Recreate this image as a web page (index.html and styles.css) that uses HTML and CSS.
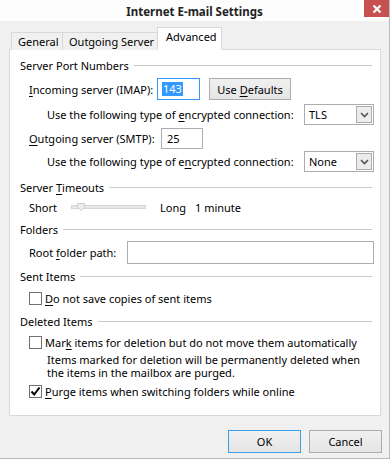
FILE: index.html
```html
<!DOCTYPE html>
<html>
<head>
<meta charset="utf-8">
<link rel="stylesheet" href="styles.css">
</head>
<body>
<div class="window">
  <div class="titlebar">
    <span class="title">Internet E-mail Settings</span>
    <div class="close"><svg width="10" height="10" viewBox="0 0 10 10"><path d="M1.5 1.5 L8.5 8.5 M8.5 1.5 L1.5 8.5" stroke="#fff" stroke-width="2.2" fill="none"/></svg></div>
  </div>
  <div class="body">
    <div class="tabs">
      <div class="tab t-general">General</div>
      <div class="tab t-out">Outgoing Server</div>
      <div class="tab active">Advanced</div>
    </div>
    <div class="panel">
      <div class="group g1"><span>Server Port Numbers</span><i class="line"></i></div>
      <div class="row r-in">
        <span class="lbl lbl-in"><u>I</u>ncoming server (IMAP):</span>
        <span class="input in-in focus"><span class="sel">143</span></span>
        <span class="btn defaults"><span>Use <u>D</u>efaults</span></span>
      </div>
      <div class="row r-enc1">
        <span class="lbl lbl-enc">Use the following type of <u>e</u>ncrypted connection:</span>
        <span class="select"><span class="val">TLS</span><span class="arrow"><svg width="9" height="6" viewBox="0 0 9 6"><path d="M1 1 L4.5 4.5 L8 1" stroke="#555" stroke-width="1.6" fill="none"/></svg></span></span>
      </div>
      <div class="row r-out">
        <span class="lbl lbl-out"><u>O</u>utgoing server (SMTP):</span>
        <span class="input in-out">25</span>
      </div>
      <div class="row r-enc2">
        <span class="lbl lbl-enc">Use the following type of e<u>n</u>crypted connection:</span>
        <span class="select"><span class="val">None</span><span class="arrow"><svg width="9" height="6" viewBox="0 0 9 6"><path d="M1 1 L4.5 4.5 L8 1" stroke="#555" stroke-width="1.6" fill="none"/></svg></span></span>
      </div>
      <div class="group g2"><span>Server <u>T</u>imeouts</span><i class="line"></i></div>
      <div class="row r-slider">
        <span class="lbl lbl-short">Short</span>
        <span class="track"><span class="thumb"><svg width="8" height="8" viewBox="0 0 8 8"><path d="M0.5 0.5 H7.5 V4.5 L4 7.5 L0.5 4.5 Z" fill="#ececec" stroke="#d0d0d0"/></svg></span></span>
        <span class="lbl lbl-long">Long</span>
        <span class="lbl">1 minute</span>
      </div>
      <div class="group g3"><span>Folders</span><i class="line"></i></div>
      <div class="row r-root">
        <span class="lbl lbl-root">Root <u>f</u>older path:</span>
        <span class="input in-root"></span>
      </div>
      <div class="group g4"><span>Sent Items</span><i class="line"></i></div>
      <div class="row r-cb1">
        <span class="cb"></span><span class="lbl"><u>D</u>o not save copies of sent items</span>
      </div>
      <div class="group g5"><span>Deleted Items</span><i class="line"></i></div>
      <div class="row r-cb2">
        <span class="cb"></span><span class="lbl">Mar<u>k</u> items for deletion but do not move them automatically</span>
      </div>
      <div class="note">Items marked for deletion will be permanently deleted when<br>the items in the mailbox are purged.</div>
      <div class="row r-cb3">
        <span class="cb checked"><svg width="11" height="11" viewBox="0 0 11 11"><path d="M1.5 5.5 L4.2 8.5 L9.5 1.5" stroke="#000" stroke-width="2" fill="none"/></svg></span><span class="lbl"><u>P</u>urge items when switching folders while online</span>
      </div>
    </div>
    <div class="buttons">
      <span class="btn dlg default">OK</span>
      <span class="btn dlg">Cancel</span>
    </div>
  </div>
</div>
</body>
</html>
```
FILE: styles.css
```css
* { box-sizing: border-box; }
html, body { margin: 0; padding: 0; background: #fff; }
body {
  font-family: "Noto Sans", "Open Sans", sans-serif;
  font-size: 11px;
  color: #000;
  width: 392px;
  height: 461px;
  overflow: hidden;
}
u { text-decoration: underline; text-underline-offset: 2px; }
.window {
  width: 390px;
  height: 459px;
  background: #f0f0f0;
  border-right: 1px solid #b9b9b9;
  border-bottom: 1px solid #b9b9b9;
  display: flex;
  flex-direction: column;
}
.titlebar {
  position: relative;
  height: 21px;
  background: #fdfdfd;
  display: flex;
  align-items: center;
  justify-content: center;
}
.title {
  font-weight: bold;
  font-size: 11.5px;
  color: #222;
  margin-top: 1px;
}
.close {
  position: absolute;
  right: 0;
  top: 0;
  width: 25px;
  height: 17px;
  background: #c75050;
  display: flex;
  align-items: center;
  justify-content: center;
}
.body {
  padding: 7px 8px 0 9px;
  display: flex;
  flex-direction: column;
}
.tabs {
  display: flex;
  align-items: flex-end;
  height: 22px;
  padding-left: 2px;
  position: relative;
  z-index: 1;
  margin-bottom: -1px;
}
.tab {
  height: 18px;
  border: 1px solid #d9d9d9;
  border-bottom: none;
  background: #f0f0f0;
  display: flex;
  align-items: center;
  padding: 0 0 0 6px;
  line-height: 1;
  white-space: nowrap;
  flex-shrink: 0;
}
.t-general { width: 52px; }
.t-out { width: 95px; border-left: none; }
.tab.active {
  width: 65px;
  margin-left: -1px;
  background: #fff;
  border-bottom: 1px solid #fff;
  height: 23px;
  padding-left: 8px;
  padding-bottom: 4px;
}
.panel {
  width: 372px;
  height: 367px;
  background: #fff;
  border: 1px solid #d9d9d9;
  padding: 7px 8px 0 10px;
  display: flex;
  flex-direction: column;
}
.group {
  height: 16px;
  display: flex;
  align-items: center;
}
.group .line {
  flex: 1;
  height: 1px;
  background: #c9c9c9;
  margin-left: 5px;
  margin-top: 1px;
}
.g2 { margin-top: 8px; }
.g3 { margin-top: 6px; }
.g4 { margin-top: 5px; }
.g5 { margin-top: 7px; }
.row {
  display: flex;
  align-items: center;
  padding-left: 9px;
  white-space: nowrap;
}
.row > * { flex-shrink: 0; }
.r-in { height: 22px; margin-top: 5px; }
.r-enc1 { height: 20px; margin-top: 4px; }
.r-out { height: 20px; margin-top: 4px; }
.r-enc2 { height: 20px; margin-top: 3px; }
.r-slider { height: 16px; margin-top: 4px; }
.r-root { height: 22px; margin-top: 4px; }
.r-cb1 { height: 16px; margin-top: 6px; }
.r-cb2 { height: 16px; margin-top: 5px; }
.r-cb3 { height: 16px; margin-top: 4px; }
.lbl-in { width: 128px; }
.lbl-out { width: 132px; }
.lbl-enc { width: 275px; padding-left: 18px; }
.lbl-short { width: 42px; }
.lbl-long { width: 35px; }
.lbl-root { width: 98px; }
.input {
  display: inline-flex;
  align-items: center;
  background: #fff;
  border: 1px solid #abadb3;
  padding-left: 4px;
}
.in-in { width: 43px; height: 22px; }
.in-in.focus { border-color: #3399ff; }
.sel { background: #3399ff; color: #fff; padding: 0 1px; line-height: 14px; }
.in-out { width: 42px; height: 21px; padding-left: 5px; }
.in-root { width: 247px; height: 23px; }
.btn {
  display: inline-flex;
  align-items: center;
  justify-content: center;
  border: 1px solid #acacac;
  background: linear-gradient(#f0f0f0, #e5e5e5);
  white-space: nowrap;
}
.defaults { width: 82px; height: 22px; margin-left: 9px; }
.select {
  display: inline-flex;
  align-items: center;
  justify-content: space-between;
  width: 70px;
  height: 21px;
  border: 1px solid #acacac;
  background: #fff;
  padding: 1px 1px 1px 4px;
}
.select .val { line-height: 1; }
.arrow {
  width: 16px;
  height: 17px;
  border: 1px solid #acacac;
  background: #ececec;
  display: flex;
  align-items: center;
  justify-content: center;
  padding-top: 1px;
}
.track {
  position: relative;
  width: 75px;
  height: 4px;
  background: #e7e7e7;
  border: 1px solid #d6d6d6;
  margin-right: 14px;
}
.thumb {
  position: absolute;
  left: 5px;
  top: -3px;
  display: flex;
}
.cb {
  width: 13px;
  height: 13px;
  border: 1px solid #707070;
  background: #fff;
  margin-right: 3px;
  display: flex;
  align-items: center;
  justify-content: center;
}
.note {
  margin-top: 3px;
  padding-left: 27px;
  line-height: 13px;
  white-space: nowrap;
}
.buttons {
  display: flex;
  justify-content: flex-end;
  gap: 8px;
  margin-top: 14px;
  margin-right: -1px;
}
.dlg { width: 73px; height: 23px; }
.dlg.default { border-color: #3c9ee6; }
```
